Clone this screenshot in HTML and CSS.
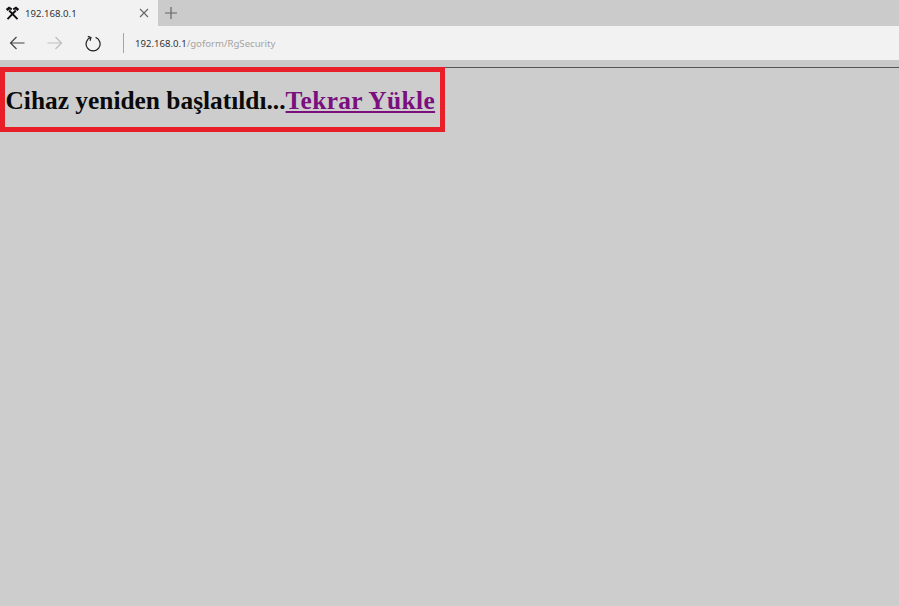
FILE: index.html
```html
<!DOCTYPE html>
<html lang="tr">
<head>
<meta charset="utf-8">
<title>192.168.0.1</title>
<link rel="stylesheet" href="styles.css">
</head>
<body>
<div class="tabbar">
  <div class="tab">
    <svg class="favicon" width="15" height="14" viewBox="0 0 15 14"><path d="M4.2 4.5 L12.5 13.2 M10.8 4.5 L2.5 13.2" stroke="#111" stroke-width="1.9" fill="none"/><path d="M0.8 3 L4 .6 L7.2 2.6 L6.6 4 L4.6 3.4 L2.5 5 Z" fill="#111"/><path d="M14.2 3 L11 .6 L7.8 2.6 L8.4 4 L10.4 3.4 L12.5 5 Z" fill="#111"/></svg>
    <span class="tab-title">192.168.0.1</span>
    <svg class="tab-close" width="10" height="10" viewBox="0 0 10 10"><path d="M1 1 L9 9 M9 1 L1 9" stroke="#666" stroke-width="1.1" fill="none"/></svg>
  </div>
  <svg class="new-tab" width="12" height="12" viewBox="0 0 12 12"><path d="M6 0 V12 M0 6 H12" stroke="#666" stroke-width="1.2" fill="none"/></svg>
</div>
<div class="toolbar">
  <svg class="nav back" width="16" height="14" viewBox="0 0 16 14"><path d="M15.5 7 H1.5 M7.5 1 L1.5 7 L7.5 13" stroke="#444" stroke-width="1.2" fill="none"/></svg>
  <svg class="nav forward" width="16" height="14" viewBox="0 0 16 14"><path d="M.5 7 H14.5 M8.5 1 L14.5 7 L8.5 13" stroke="#bdbdbd" stroke-width="1.2" fill="none"/></svg>
  <svg class="nav reload" width="16" height="18" viewBox="0 0 16 18"><path d="M5.6 3.4 A7 7 0 1 0 10.6 3.4" stroke="#222" stroke-width="1.2" fill="none"/><path d="M2.8 2.4 L6 3.6 L5 6.8" stroke="#222" stroke-width="1.2" fill="none"/></svg>
  <div class="divider"></div>
  <div class="address"><span class="host">192.168.0.1</span><span class="path">/goform/RgSecurity</span></div>
</div>
<div class="toolbar-foot"></div>
<main class="page">
  <h2 class="message">Cihaz yeniden başlatıldı...<a class="reload-link" href="#">Tekrar Yükle</a></h2>
  <div class="highlight"></div>
</main>
</body>
</html>
```
FILE: styles.css
```css
* { box-sizing: border-box; }
html, body { margin: 0; height: 100%; }
body {
  width: 899px;
  height: 606px;
  overflow: hidden;
  background: #cdcdcd;
  display: flex;
  flex-direction: column;
  font-family: "Noto Sans", "Liberation Sans", sans-serif;
}
.tabbar {
  height: 26px;
  background: #cbcbcb;
  display: flex;
  align-items: center;
  flex: none;
}
.tab {
  width: 158px;
  height: 26px;
  background: #f2f2f2;
  display: flex;
  align-items: center;
  padding-left: 5px;
}
.favicon { flex: none; margin-bottom: 1px; }
.tab-title {
  margin-left: 5px;
  font-size: 9.6px;
  color: #333;
  flex: 1;
}
.tab-close { margin-right: 9px; }
.new-tab { margin-left: 7px; margin-bottom: 1px; }
.toolbar {
  height: 34px;
  background: #f2f2f2;
  display: flex;
  align-items: center;
  flex: none;
}
.nav { flex: none; }
.back { margin-left: 9px; }
.forward { margin-left: 22px; }
.reload { margin-left: 22px; }
.divider {
  width: 1px;
  height: 20px;
  background: #a5a5a5;
  margin-left: 22px;
}
.address {
  margin-left: 11px;
  font-size: 9.6px;
  white-space: nowrap;
}
.host { color: #333; }
.path { color: #a3a3a3; }
.toolbar-foot {
  height: 7px;
  background: #c9c9c9;
  flex: none;
}
.page {
  position: relative;
  flex: 1;
  border-top: 1px solid #555;
  padding: 19px 5.5px 0;
}
.message {
  margin: 0;
  font-family: "Liberation Serif", "Times New Roman", serif;
  font-size: 25.4px;
  font-weight: bold;
  line-height: 27px;
  color: #0a0a0a;
}
.reload-link {
  color: #7a0f7d;
  text-decoration: underline;
  letter-spacing: 0.37px;
}
.highlight {
  position: absolute;
  left: 0;
  top: -1px;
  width: 445px;
  height: 65px;
  border: 5px solid #e81f29;
}
```
